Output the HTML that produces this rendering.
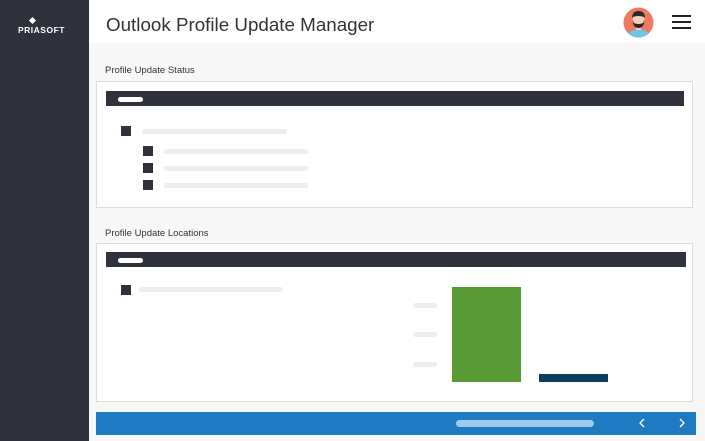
<!DOCTYPE html>
<html><head><style>
*{margin:0;padding:0;box-sizing:border-box}
body{width:705px;height:441px;position:relative;background:#f7f7f7;font-family:"Liberation Sans",sans-serif;overflow:hidden}
.a{position:absolute}
</style></head><body>
<div class="a" style="left:0;top:0;width:89px;height:441px;background:#2f323d"></div>
<div class="a" style="left:18px;top:25px;color:#fff;font-size:8.5px;font-weight:bold;letter-spacing:0.5px">PRIASOFT</div>
<div class="a" style="left:30px;top:18px;width:5px;height:5px;background:#fff;transform:rotate(45deg)"></div>
<div class="a" style="left:89px;top:0;width:616px;height:43px;background:#fff"></div>
<div class="a" style="left:106px;top:14px;font-size:18.8px;color:#333">Outlook Profile Update Manager</div>
<svg class="a" style="left:622px;top:6px" width="33" height="33" viewBox="0 0 33 33">
<clipPath id="c"><circle cx="16.5" cy="16.5" r="15"/></clipPath>
<circle cx="16.5" cy="16.5" r="15" fill="#f07a61"/>
<g clip-path="url(#c)"><path d="M4 33 Q5 24 16.5 23 Q28 24 29 33Z" fill="#6cc6ea"/>
<rect x="14" y="19" width="5" height="5" fill="#f5d0b5"/>
<ellipse cx="16.5" cy="14" rx="6" ry="7" fill="#f5d0b5"/>
<path d="M10 12 Q10 5 16.5 5 Q23 5 23 12 L22 11 Q16 9 11 11Z" fill="#2a2a2a"/>
<path d="M10.5 14 Q11 22 16.5 22 Q22 22 22.5 14 L21 17 Q16.5 19 12 17Z" fill="#2a2a2a"/></g>
</svg>
<div class="a" style="left:672px;top:15px;width:19px;height:2px;background:#222"></div>
<div class="a" style="left:672px;top:21px;width:19px;height:2px;background:#222"></div>
<div class="a" style="left:672px;top:27px;width:19px;height:2px;background:#222"></div>

<div class="a" style="left:105px;top:65px;font-size:9.5px;color:#333">Profile Update Status</div>
<div class="a" style="left:96px;top:81px;width:597px;height:127px;background:#fff;border:1px solid #ddd"></div>
<div class="a" style="left:106px;top:91px;width:578px;height:15px;background:#2f323d"></div>
<div class="a" style="left:118px;top:97px;width:25px;height:5px;background:#fff;border-radius:3px"></div>
<div class="a" style="left:121px;top:126px;width:10px;height:10px;background:#2f323d"></div>
<div class="a" style="left:142px;top:129px;width:145px;height:5px;background:#eee;border-radius:3px"></div>
<div class="a" style="left:143px;top:146px;width:10px;height:10px;background:#2f323d"></div>
<div class="a" style="left:143px;top:163px;width:10px;height:10px;background:#2f323d"></div>
<div class="a" style="left:143px;top:180px;width:10px;height:10px;background:#2f323d"></div>
<div class="a" style="left:164px;top:149px;width:144px;height:5px;background:#eee;border-radius:3px"></div>
<div class="a" style="left:164px;top:166px;width:144px;height:5px;background:#eee;border-radius:3px"></div>
<div class="a" style="left:164px;top:183px;width:144px;height:5px;background:#eee;border-radius:3px"></div>

<div class="a" style="left:105px;top:228px;font-size:9.5px;color:#333">Profile Update Locations</div>
<div class="a" style="left:96px;top:243px;width:597px;height:159px;background:#fff;border:1px solid #ddd"></div>
<div class="a" style="left:106px;top:252px;width:580px;height:15px;background:#2f323d"></div>
<div class="a" style="left:118px;top:258px;width:25px;height:5px;background:#fff;border-radius:3px"></div>
<div class="a" style="left:121px;top:285px;width:10px;height:10px;background:#2f323d"></div>
<div class="a" style="left:139px;top:287px;width:144px;height:5px;background:#eee;border-radius:3px"></div>
<div class="a" style="left:413px;top:303px;width:24px;height:5px;background:#eee;border-radius:3px"></div>
<div class="a" style="left:413px;top:332px;width:24px;height:5px;background:#eee;border-radius:3px"></div>
<div class="a" style="left:413px;top:362px;width:24px;height:5px;background:#eee;border-radius:3px"></div>
<div class="a" style="left:452px;top:287px;width:69px;height:95px;background:#5a9a35"></div>
<div class="a" style="left:539px;top:374px;width:69px;height:8px;background:#0f3d5e"></div>

<div class="a" style="left:96px;top:412px;width:600px;height:23px;background:#1f7bc1"></div>
<div class="a" style="left:456px;top:420px;width:138px;height:7px;background:#9ecbed;border-radius:4px"></div>
<svg class="a" style="left:636px;top:416px" width="60" height="14"><path d="M8 3 L4 7 L8 11" stroke="#fff" stroke-width="1.3" fill="none"/><path d="M44 3 L48 7 L44 11" stroke="#fff" stroke-width="1.3" fill="none"/></svg>
</body></html>
